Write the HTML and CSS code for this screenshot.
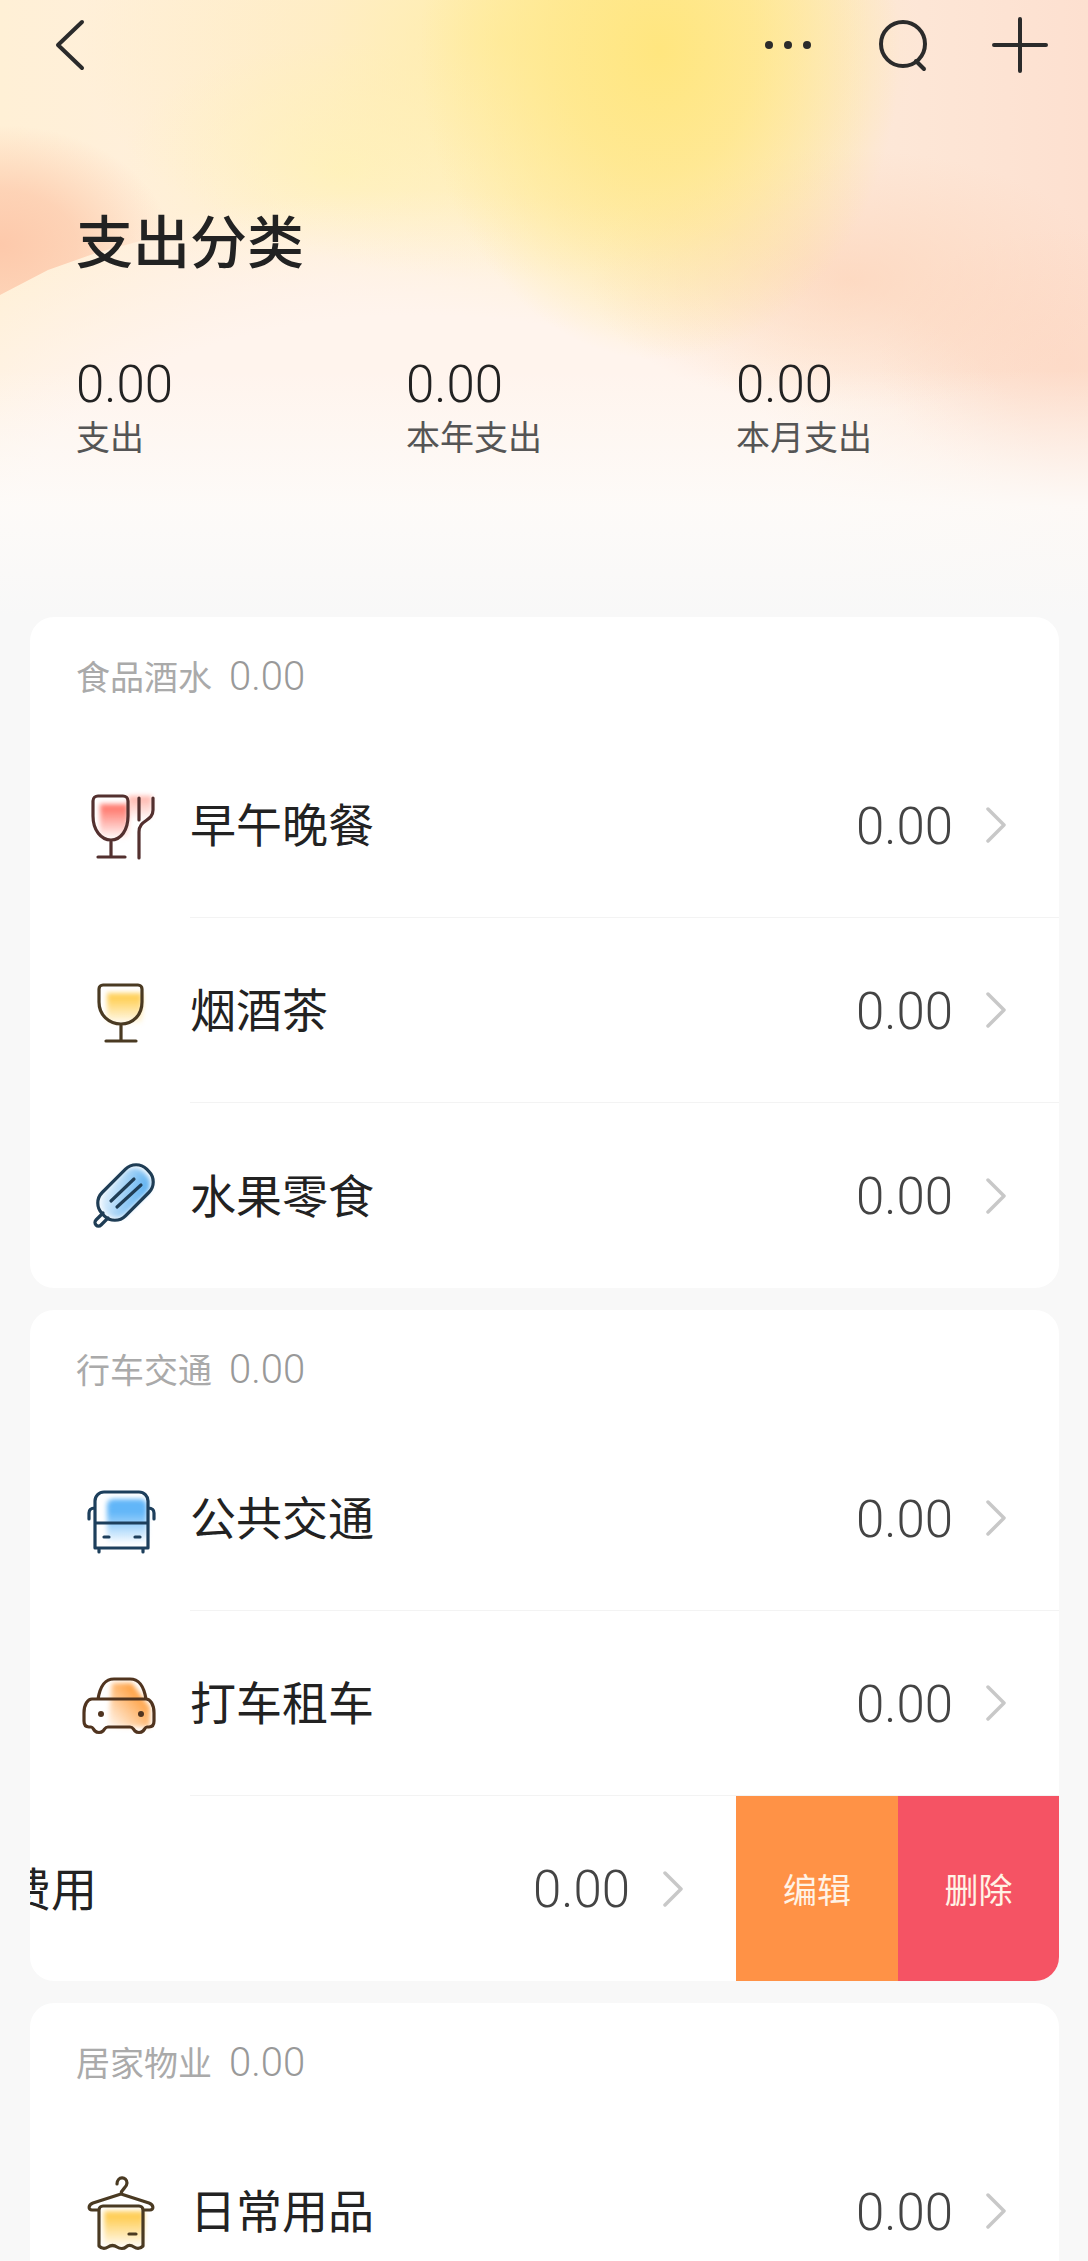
FILE: index.html
```html
<!DOCTYPE html>
<html lang="zh-CN">
<head>
<meta charset="utf-8">
<title>支出分类</title>
<link rel="stylesheet" href="styles.css">
</head>
<body>
<div class="page">
  <header class="hero">
    <nav class="nav">
      <svg class="nav-back" width="30" height="52" viewBox="0 0 30 52"><path d="M27 3 3 26l24 23"/></svg>
      <div class="nav-actions">
        <svg class="nav-dots" width="48" height="12" viewBox="0 0 48 12"><circle cx="5" cy="6" r="4"/><circle cx="24" cy="6" r="4"/><circle cx="43" cy="6" r="4"/></svg>
        <svg class="nav-icon" width="56" height="56" viewBox="0 0 56 56"><circle cx="27" cy="27" r="22"/><path d="m40 44 8 8"/></svg>
        <svg class="nav-icon" width="56" height="56" viewBox="0 0 56 56"><path d="M28 2v52M2 28h52"/></svg>
      </div>
    </nav>
    <h1 class="title">支出分类</h1>
    <div class="stats">
      <div class="stat"><div class="stat-num">0.00</div><div class="stat-label">支出</div></div>
      <div class="stat"><div class="stat-num">0.00</div><div class="stat-label">本年支出</div></div>
      <div class="stat"><div class="stat-num">0.00</div><div class="stat-label">本月支出</div></div>
    </div>
  </header>

  <section class="card">
    <div class="card-head"><span class="group">食品酒水</span><span class="group-num">0.00</span></div>
    <div class="row">
      <svg class="cat" width="120" height="120" viewBox="0 4 120 120">
        <defs><linearGradient id="g1" x1="0" y1="0" x2="0" y2="1"><stop offset="0.15" stop-color="#ff7d72"/><stop offset="1" stop-color="#ff7d72" stop-opacity="0.05"/></linearGradient>
        <linearGradient id="g1b" x1="0" y1="0" x2="0" y2="1"><stop offset="0" stop-color="#ffb0a6"/><stop offset="1" stop-color="#ffb0a6" stop-opacity="0"/></linearGradient></defs>
        <rect class="soft" x="40" y="42" width="28" height="34" fill="url(#g1)"/>
        <rect class="soft" x="68" y="34" width="24" height="24" fill="url(#g1b)"/>
        <path class="ln wine" d="M38 34h25a5 5 0 0 1 5 5v15c0 14-7 24-17 24s-18-10-18-24V39a5 5 0 0 1 5-5ZM51 78v17M38 95h27M79 36v22M93 36v12c0 12-14 9-14 22v26"/>
      </svg>
      <div class="row-body"><span class="name">早午晚餐</span><span class="amount">0.00</span><svg class="chev" width="22" height="36" viewBox="0 0 22 36"><path d="m3 2 16 16L3 34"/></svg></div>
    </div>
    <div class="row">
      <svg class="cat" width="120" height="120" viewBox="0 -1 120 120">
        <defs><linearGradient id="g2" x1="0" y1="0" x2="0" y2="1"><stop offset="0.2" stop-color="#ffd15c"/><stop offset="1" stop-color="#ffd15c" stop-opacity="0.1"/></linearGradient></defs>
        <rect class="soft" x="47" y="41" width="35" height="30" fill="url(#g2)"/>
        <path class="ln beer" d="M43 33h35a4 4 0 0 1 4 4v13c0 13-9 22-21 22s-22-9-22-22V37a4 4 0 0 1 4-4ZM61 72v17M46 89h30"/>
      </svg>
      <div class="row-body"><span class="name">烟酒茶</span><span class="amount">0.00</span><svg class="chev" width="22" height="36" viewBox="0 0 22 36"><path d="m3 2 16 16L3 34"/></svg></div>
    </div>
    <div class="row row-last">
      <svg class="cat" width="120" height="120" viewBox="0 4 120 120">
        <defs><linearGradient id="g3" x1="1" y1="0" x2="0" y2="1"><stop offset="0.1" stop-color="#58aef0"/><stop offset="1" stop-color="#58aef0" stop-opacity="0.05"/></linearGradient></defs>
        <rect class="soft" x="50" y="33" width="31" height="56" rx="14" transform="rotate(45 65.500 60.500)" fill="url(#g3)"/>
        <rect class="ln ice" x="49" y="29" width="33" height="63" rx="15" transform="rotate(45 65.500 60.500)"/>
        <path class="ln ice" d="M51 69 74 47M57 75 81 53M43 81l-7 7a3.500 3.500 0 0 0 5 5l7-7"/>
      </svg>
      <div class="row-body"><span class="name">水果零食</span><span class="amount">0.00</span><svg class="chev" width="22" height="36" viewBox="0 0 22 36"><path d="m3 2 16 16L3 34"/></svg></div>
    </div>
  </section>

  <section class="card">
    <div class="card-head"><span class="group">行车交通</span><span class="group-num">0.00</span></div>
    <div class="row">
      <svg class="cat" width="120" height="120" viewBox="0 -3 120 120">
        <defs><linearGradient id="g4" x1="0" y1="0" x2="0" y2="1"><stop offset="0.3" stop-color="#62b6f8"/><stop offset="1" stop-color="#62b6f8" stop-opacity="0.05"/></linearGradient></defs>
        <rect class="soft" x="47" y="37" width="40" height="44" rx="6" fill="url(#g4)"/>
        <path class="ln bus" d="M44 30h35a9 9 0 0 1 9 9v47H35V39a9 9 0 0 1 9-9ZM35 61h53M35 46c-4 0-6 2-6 5v6M88 46c4 0 6 2 6 5v6M39 86v4M83 86v4M44 75h5M75 75h5"/>
      </svg>
      <div class="row-body"><span class="name">公共交通</span><span class="amount">0.00</span><svg class="chev" width="22" height="36" viewBox="0 0 22 36"><path d="m3 2 16 16L3 34"/></svg></div>
    </div>
    <div class="row">
      <svg class="cat" width="120" height="120" viewBox="0 -7 120 120">
        <defs><linearGradient id="g5" x1="1" y1="0" x2="0" y2="1"><stop offset="0.2" stop-color="#ff9a35"/><stop offset="1" stop-color="#ff9a35" stop-opacity="0.05"/></linearGradient></defs>
        <path class="soft" d="M52 32h20l10 14 8 10v20H48z" fill="url(#g5)"/>
        <path class="ln car" d="M38 48c2-12 6-20 16-20h16c10 0 14 8 16 20M38 48h48c4 0 8 5 8 14v8c0 4-2 6-5 6h-2c-2 0-2 2-4 4-2 2-6 2-8 0s-2-4-5-4H48c-3 0-3 2-5 4s-6 2-8 0-2-4-4-4h-2c-3 0-5-2-5-6v-8c0-9 4-14 8-14Z"/>
        <circle class="dot-car" cx="41" cy="63" r="3"/><circle class="dot-car" cx="81" cy="63" r="3"/>
      </svg>
      <div class="row-body"><span class="name">打车租车</span><span class="amount">0.00</span><svg class="chev" width="22" height="36" viewBox="0 0 22 36"><path d="m3 2 16 16L3 34"/></svg></div>
    </div>
    <div class="row row-last row-swiped">
      <div class="swipe">
        <svg class="cat" width="120" height="120" viewBox="0 0 120 120"></svg>
        <div class="row-body"><span class="name">私家车费用</span><span class="amount">0.00</span><svg class="chev" width="22" height="36" viewBox="0 0 22 36"><path d="m3 2 16 16L3 34"/></svg></div>
      </div>
      <div class="actions"><div class="act act-edit">编辑</div><div class="act act-del">删除</div></div>
    </div>
  </section>

  <section class="card">
    <div class="card-head"><span class="group">居家物业</span><span class="group-num">0.00</span></div>
    <div class="row">
      <svg class="cat" width="120" height="120" viewBox="0 1 120 120">
        <defs><linearGradient id="g6" x1="0" y1="0" x2="0" y2="1"><stop offset="0.2" stop-color="#ffcf5a"/><stop offset="1" stop-color="#ffcf5a" stop-opacity="0.1"/></linearGradient></defs>
        <rect class="soft" x="44" y="60" width="40" height="35" fill="url(#g6)"/>
        <path class="ln towel" d="M57 33c0-8 10-8 10-1 0 5-6 6-6 11L33 52c-5 2-5 7-1 7h7M61 43l28 9c5 2 5 7 1 7h-7M43 55h36a4 4 0 0 1 4 4v36c-3 3-6 3-9 1s-6-2-8 0-6 2-9 0-6-2-9 0-6 2-9-1V59a4 4 0 0 1 4-4ZM69 83h7"/>
      </svg>
      <div class="row-body"><span class="name">日常用品</span><span class="amount">0.00</span><svg class="chev" width="22" height="36" viewBox="0 0 22 36"><path d="m3 2 16 16L3 34"/></svg></div>
    </div>
  </section>
</div>
</body>
</html>
```
FILE: styles.css
```css
* { box-sizing: border-box; }
html, body { margin: 0; padding: 0; height: 2261px; overflow: hidden; background: #f8f8f8; }
body { font-family: "Noto Sans CJK SC", "Noto Sans", sans-serif; color: #222; }
.page { height: 2261px; overflow: hidden; }

.hero {
  height: 617px;
  position: relative;
  isolation: isolate;
  background:
    linear-gradient(to bottom, rgba(248,248,248,0) 60%, rgba(253,251,249,.92) 82%, #f8f8f8 100%),
    radial-gradient(ellipse 240px 310px at 660px 50px, #ffe67f 0%, rgba(255,231,135,.8) 40%, rgba(255,231,135,0) 100%),
    radial-gradient(ellipse 420px 240px at 500px 40px, rgba(255,236,150,.65), rgba(255,236,150,0)),
    radial-gradient(ellipse 260px 130px at 850px 280px, rgba(253,208,180,.6), rgba(253,208,180,0)),
    radial-gradient(ellipse 180px 130px at 1060px 360px, rgba(253,212,190,.5), rgba(253,212,190,0)),
    radial-gradient(ellipse 640px 330px at 420px 520px, #fff4ed 62%, rgba(255,244,237,0) 100%),
    radial-gradient(ellipse 220px 130px at 340px 170px, rgba(255,243,195,.9), rgba(255,243,195,0)),
    linear-gradient(to right, #fff0d6 0%, #ffeee0 30%, #fff0cc 50%, #fde8d8 80%, #fde0d0 100%);
}
.hero::before {
  content: "";
  position: absolute;
  z-index: -1;
  left: 0;
  top: 110px;
  width: 260px;
  height: 190px;
  background: radial-gradient(ellipse 170px 120px at 0 135px, #fdc9ab 0%, rgba(253,201,171,.75) 45%, rgba(253,201,171,0) 100%);
  clip-path: polygon(0 0, 100% 0, 100% 108px, 240px 112px, 192px 120px, 144px 130px, 96px 143px, 48px 160px, 0 185px);
}
.nav { height: 90px; padding: 0 40px 0 55px; display: flex; align-items: center; justify-content: space-between; }
.nav-back path, .nav-icon circle, .nav-icon path { fill: none; stroke: #2b2b2b; stroke-width: 4; stroke-linecap: round; stroke-linejoin: round; }
.nav-dots circle { fill: #2b2b2b; }
.nav-actions { display: flex; align-items: center; }
.nav-dots { margin-right: 64px; }
.nav-icon + .nav-icon { margin-left: 60px; }
.title { margin: 0; padding: 117px 0 0 76px; font-size: 57px; line-height: 62px; font-weight: 500; color: #222; }
.stats { display: grid; grid-template-columns: 330px 330px 330px; padding: 88px 0 0 76px; }
.stat-num { font-family: Roboto, "Noto Sans", sans-serif; font-size: 51px; line-height: 56px; color: #222; font-weight: 300; }
.stat-label { font-size: 34px; line-height: 44px; margin-top: 1px; color: #555; }

.card { margin: 0 29px 22px 30px; background: #fff; border-radius: 24px; overflow: hidden; position: relative; }
.card-head { height: 116px; padding: 0 0 0 46px; display: flex; align-items: center; gap: 17px; }
.group { font-size: 34px; color: #aaa; }
.group-num { font-family: Roboto, "Noto Sans", sans-serif; font-size: 40px; font-weight: 300; color: #999; padding-top: 2px; }

.row { height: 185px; display: flex; align-items: stretch; padding-left: 30px; position: relative; }
.cat { flex: none; align-self: center; margin-right: 10px; }
.row-body { flex: 1; min-width: 0; display: flex; align-items: center; padding-right: 52px; border-bottom: 1px solid #f3f3f3; }
.row-last .row-body { border-bottom: 0; }
.name { flex: 1; font-size: 46px; color: #222; padding-bottom: 6px; }
.amount { font-family: Roboto, "Noto Sans", sans-serif; font-size: 51px; font-weight: 300; color: #444; margin-right: 32px; padding-top: 2px; }
.chev path { fill: none; stroke: #c8c8c8; stroke-width: 3.500; stroke-linecap: round; stroke-linejoin: round; }

.swipe { flex: none; width: calc(100% + 30px); display: flex; align-items: stretch; transform: translateX(-323px); margin-left: -30px; padding-left: 30px; }
.actions { position: absolute; top: 0; right: 0; bottom: 0; display: flex; }
.act { display: flex; align-items: center; justify-content: center; font-size: 34px; color: #fff3e6; width: 162px; }
.act-edit { background: #ff9246; }
.act-del { background: #f55364; width: 161px; }

.soft { filter: blur(2.500px); }
.ln { fill: none; stroke-width: 3.200; stroke-linecap: round; stroke-linejoin: round; }
.wine { stroke: #53302f; }
.beer { stroke: #4a3a22; }
.ice { stroke: #1f3d55; }
.bus { stroke: #1d3f5c; }
.car { stroke: #50341f; }
.dot-car { fill: #50341f; }
.towel { stroke: #4a3a22; }
```
